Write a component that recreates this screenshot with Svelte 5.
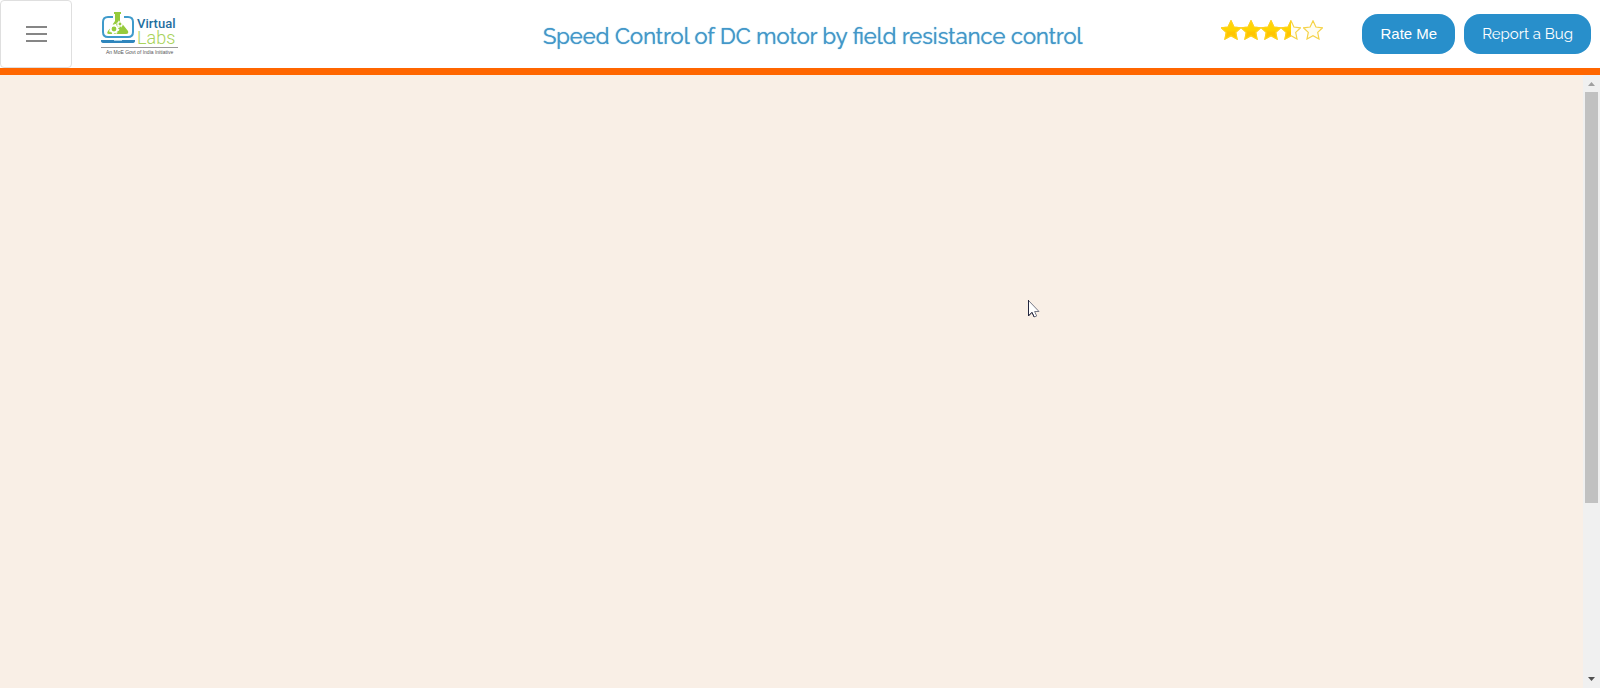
<script>
  const title = 'Speed Control of DC motor by field resistance control';
  const rating = 3.5;
  const star = 'M10 0.8 L12.9 7 L19.6 7.8 L14.7 12.4 L16 19 L10 15.8 L4 19 L5.3 12.4 L0.4 7.8 L7.1 7 Z';
  const fills = [0, 1, 2, 3, 4].map((i) => Math.max(0, Math.min(1, rating - i)));
</script>

<div class="page">
  <header>
    <button class="menu" aria-label="Toggle navigation">
      <svg width="24" height="18" viewBox="0 0 24 18" aria-hidden="true">
        <path d="M2 2H23M2 9H23M2 16H23" stroke="#868686" stroke-width="2" />
      </svg>
    </button>

    <a class="logo" href="#home" aria-label="Virtual Labs">
      <svg width="80" height="46" viewBox="0 0 80 46">
        <path d="M13 5H8Q3 5 3 10V20Q3 25 8 25H28Q33 25 33 20V10Q33 5 28 5H24" fill="none" stroke="#3f9bcb" stroke-width="2" />
        <path d="M1 28H35V29Q35 31 32 31H4Q1 31 1 29Z" fill="#2f86bd" />
        <path d="M14 28H22V29H14Z" fill="#a8d3ea" />
        <path d="M14 0H21V2H20V9L28 19Q29 22 26 22H9Q6 22 8 19L15 9V2H14Z" fill="#96cb3c" />
        <circle cx="14" cy="17" r="3.4" fill="none" stroke="#fff" stroke-width="2" />
        <circle cx="14" cy="17" r="4.7" fill="none" stroke="#fff" stroke-width="1.2" stroke-dasharray="1.85 1.84" />
        <circle cx="20" cy="12" r="2.1" fill="none" stroke="#fff" stroke-width="1.3" />
        <circle cx="20" cy="12" r="3.1" fill="none" stroke="#fff" stroke-width="1" stroke-dasharray="1.2 1.23" />
        <text class="virtual" x="37" y="16">Virtual</text>
        <text class="labs" x="37" y="32">Labs</text>
        <path d="M1 35.5H78" stroke="#999" stroke-width="1" />
        <text class="tagline" x="6" y="42">An MoE Govt of India Initiative</text>
      </svg>
    </a>

    <h1>{title}</h1>

    <div class="stars" role="img" aria-label="Rated 3.5 out of 5">
      {#each fills as fill, i}
        <svg width="20" height="20" viewBox="0 0 20 20" aria-hidden="true">
          <defs>
            <linearGradient id="gold" x1="0" y1="0" x2="0" y2="1">
              <stop offset="0" stop-color="#ffd500" />
              <stop offset="0.5" stop-color="#ffd500" />
              <stop offset="0.65" stop-color="#ffc400" />
              <stop offset="1" stop-color="#ffc800" />
            </linearGradient>
            <clipPath id="part{i}"><rect width={fill * 20} height="20" /></clipPath>
          </defs>
          <path d={star} fill="#fffdf2" stroke="#f5d348" stroke-width="1.2" />
          <path d={star} fill="url(#gold)" stroke="#ffd21c" stroke-width="1.2" clip-path="url(#part{i})" />
        </svg>
      {/each}
    </div>

    <div class="actions">
      <button class="pill rate">Rate Me</button>
      <button class="pill">Report a Bug</button>
    </div>
  </header>

  <main>
    <div class="canvas"></div>
    <div class="scrollbar" aria-hidden="true">
      <svg width="17" height="17" viewBox="0 0 17 17"><path d="M5 11L8.5 7L12 11Z" fill="#a0a0a0" /></svg>
      <div class="track"><div class="thumb"></div></div>
      <svg width="17" height="17" viewBox="0 0 17 17"><path d="M5 6L8.5 10L12 6Z" fill="#505050" /></svg>
    </div>
  </main>

  <svg class="pointer" width="14" height="20" viewBox="0 0 14 20" aria-hidden="true">
    <path d="M1.5 1.5V16.5L4.8 13.4L7.2 18L9.7 17L7.6 12.5H12Z" fill="#fff" stroke="#777987" stroke-width="1" />
    <path d="M1.5 1V17L5 13.4L7.2 18" fill="none" stroke="#25273f" stroke-width="1" />
  </svg>
</div>

<style>
  :global(body) {
    margin: 0;
  }

  .page {
    position: relative;
    display: flex;
    flex-direction: column;
    min-height: 100vh;
    background: #fff;
    font-family: Raleway, Lato, sans-serif;
  }

  header {
    display: flex;
    align-items: flex-start;
    border-bottom: 7px solid #ff6600;
  }

  button {
    margin: 0;
    font-family: inherit;
    cursor: pointer;
  }

  .menu {
    display: flex;
    align-items: center;
    justify-content: center;
    box-sizing: border-box;
    width: 72px;
    height: 68px;
    padding: 0;
    border: 1px solid #dfdfdf;
    border-radius: 4px;
    background: #fff;
  }

  .logo {
    display: flex;
    margin: 12px 0 0 28px;
  }

  .virtual {
    font: 500 13px Roboto, sans-serif;
    fill: #1f6f9f;
  }

  .labs {
    font: 300 18px Roboto, sans-serif;
    fill: #a9d35c;
  }

  .tagline {
    font: 5px "Liberation Sans", sans-serif;
    fill: #555;
  }

  h1 {
    flex: 1;
    margin: 20px 0 0 14%;
    color: #4297c9;
    font-size: 22px;
    font-weight: 400;
    line-height: 32px;
    text-align: center;
    text-shadow: 0 0 1px #4297c9;
    white-space: nowrap;
  }

  .stars {
    display: flex;
    margin: 20px 39px 0 0;
  }

  .stars svg:last-child {
    margin-left: 2px;
  }

  .actions {
    display: flex;
    gap: 9px;
    margin: 14px 9px 0 0;
  }

  .pill {
    height: 40px;
    padding: 0 18px;
    border: 0;
    border-radius: 16px;
    background: #288fcb;
    color: #fff;
    font-size: 15px;
    line-height: 40px;
  }

  .rate {
    font-family: "Liberation Sans", Arial, sans-serif;
  }

  main {
    display: flex;
    flex: 1;
  }

  .canvas {
    flex: 1;
    background: #f9efe6;
  }

  .scrollbar {
    display: flex;
    flex-direction: column;
    width: 17px;
    background: #f0f0f0;
  }

  .track {
    display: grid;
    flex: 1;
    padding: 0 2px;
  }

  .thumb {
    height: 71%;
    background: #c1c1c1;
  }

  .pointer {
    position: absolute;
    top: 299px;
    left: 1027px;
  }
</style>
